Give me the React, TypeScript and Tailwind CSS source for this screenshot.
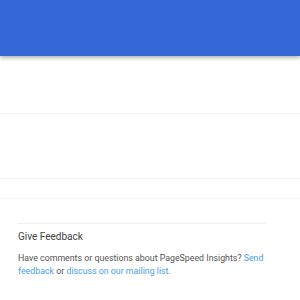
export default function App() {
  return (
    <div className="w-[300px] h-[300px] bg-white overflow-hidden" style={{ fontFamily: "Roboto, 'Liberation Sans', sans-serif" }}>
      <div className="h-[56px] bg-[#3367d6] shadow-[0_2px_4px_rgba(0,0,0,0.3)] relative z-10" />
      <div className="h-[58px] border-b border-[#eeeeee]" />
      <div className="h-[65px] border-b border-[#f2f2f2]" />
      <div className="h-[20px] border-b border-[#f2f2f2]" />
      <div className="pl-[18px] pr-[34px] pt-[24px]">
        <div className="border-t border-[#eeeeee] pt-[6px]">
          <div className="text-[10px] leading-[14px] text-[#444]">Give Feedback</div>
          <p className="mt-[8px] text-[8.8px] leading-[13px] text-[#555]">
            Have comments or questions about PageSpeed Insights?{" "}
            <span className="text-[#4a9ee8]">Send feedback</span> or{" "}
            <span className="text-[#4a9ee8]">discuss on our mailing list</span>.
          </p>
        </div>
      </div>
    </div>
  );
}
